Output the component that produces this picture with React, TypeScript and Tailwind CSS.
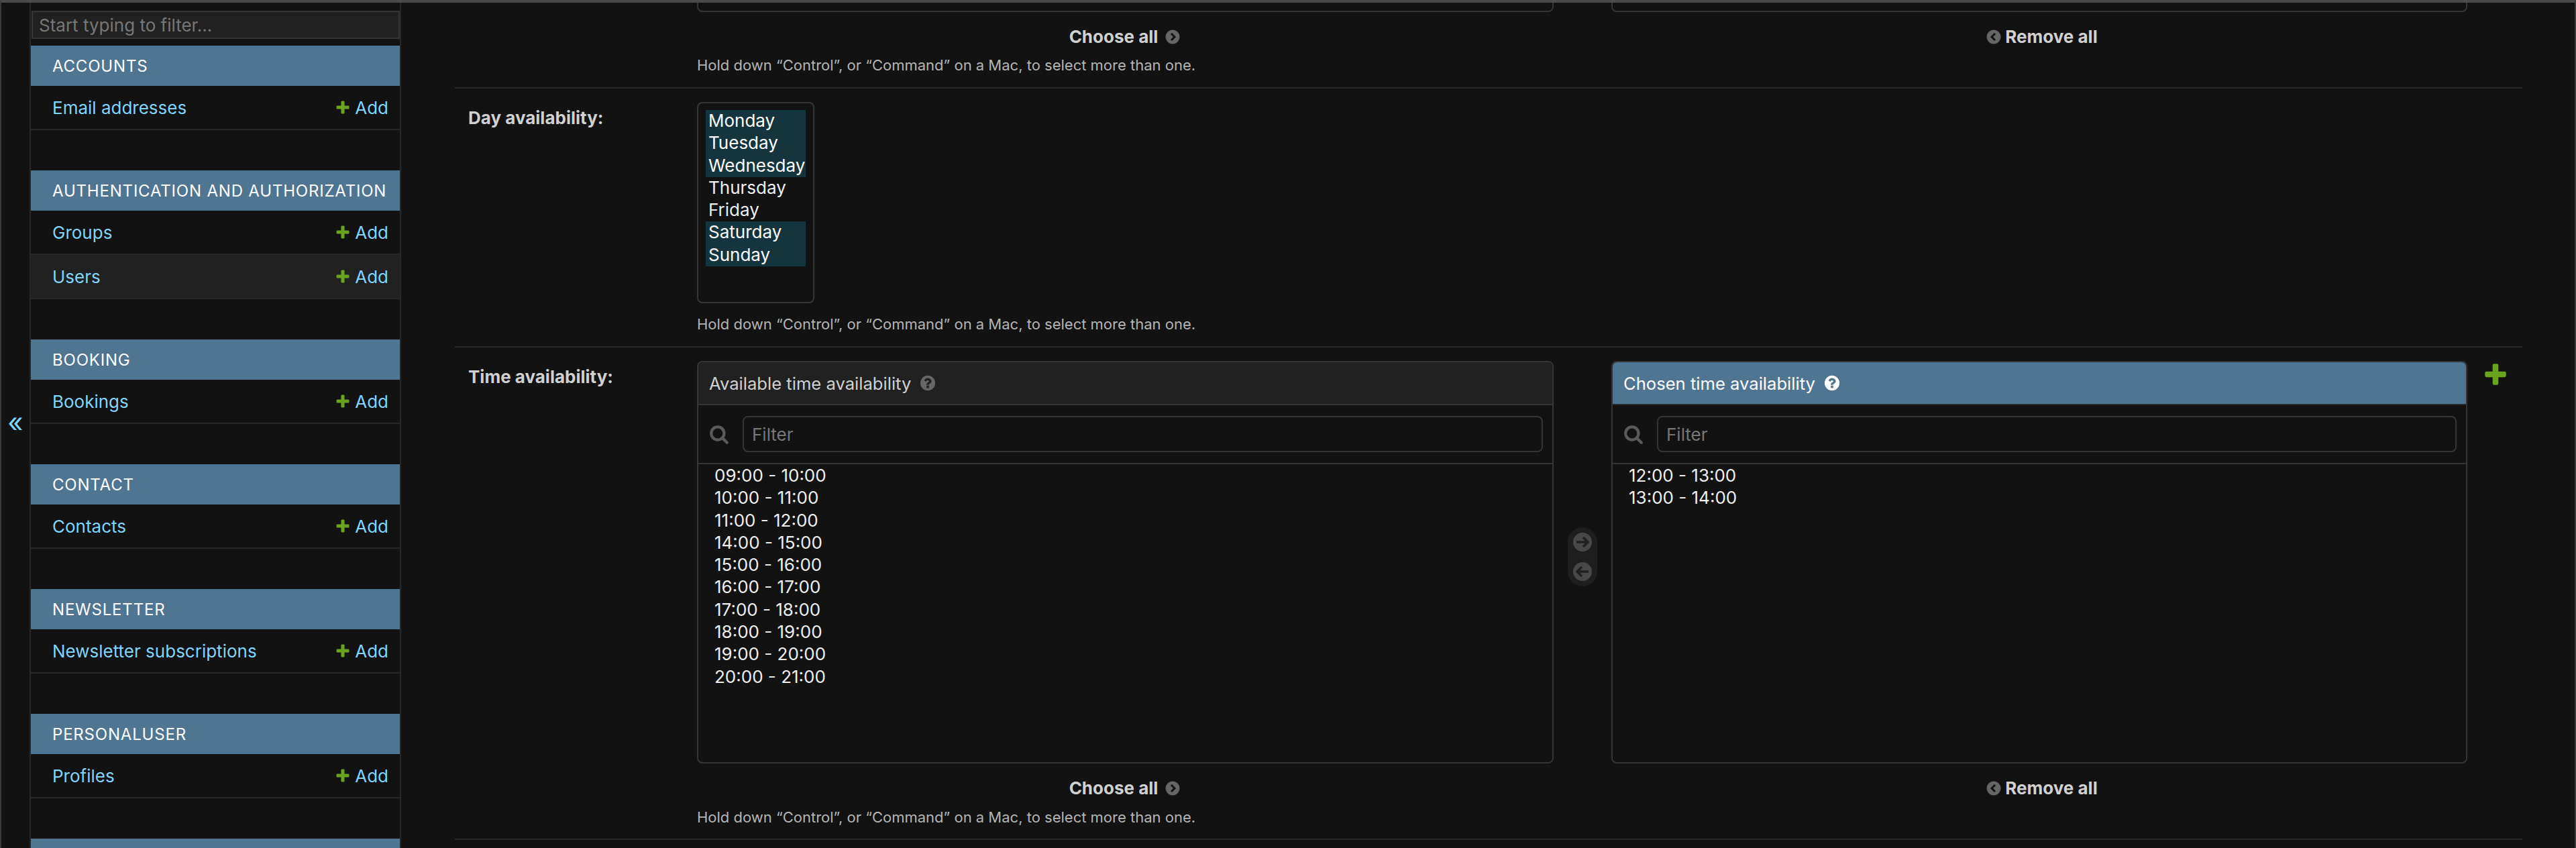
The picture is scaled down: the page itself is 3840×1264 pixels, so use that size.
import React from 'react';

const fontClass = "font-['Inter','Liberation_Sans',sans-serif]";

const sections = [
  { title: 'ACCOUNTS', rows: ['Email addresses'] },
  { title: 'AUTHENTICATION AND AUTHORIZATION', rows: ['Groups', 'Users'] },
  { title: 'BOOKING', rows: ['Bookings'] },
  { title: 'CONTACT', rows: ['Contacts'] },
  { title: 'NEWSLETTER', rows: ['Newsletter subscriptions'] },
  { title: 'PERSONALUSER', rows: ['Profiles'] },
];

const days = [
  { name: 'Monday', selected: true },
  { name: 'Tuesday', selected: true },
  { name: 'Wednesday', selected: true },
  { name: 'Thursday', selected: false },
  { name: 'Friday', selected: false },
  { name: 'Saturday', selected: true },
  { name: 'Sunday', selected: true },
];

const availableTimes = [
  '09:00 - 10:00',
  '10:00 - 11:00',
  '11:00 - 12:00',
  '14:00 - 15:00',
  '15:00 - 16:00',
  '16:00 - 17:00',
  '17:00 - 18:00',
  '18:00 - 19:00',
  '19:00 - 20:00',
  '20:00 - 21:00',
];

const chosenTimes = ['12:00 - 13:00', '13:00 - 14:00'];

const PlusIcon = ({ className }: { className: string }) => (
  <svg viewBox="0 0 1792 1792" className={className}>
    <path
      fill="#6aa41e"
      d="M1600 796v192q0 40-28 68t-68 28h-416v416q0 40-28 68t-68 28h-192q-40 0-68-28t-28-68v-416h-416q-40 0-68-28t-28-68v-192q0-40 28-68t68-28h416v-416q0-40 28-68t68-28h192q40 0 68 28t28 68v416h416q40 0 68 28t28 68z"
    />
  </svg>
);

const HelpIcon = ({ color }: { color: string }) => (
  <svg viewBox="0 0 1792 1792" className="w-[26px] h-[26px] shrink-0">
    <path
      fill={color}
      d="M1024 1376v-192q0-14-9-23t-23-9h-192q-14 0-23 9t-9 23v192q0 14 9 23t23 9h192q14 0 23-9t9-23zm256-672q0-88-55.5-163t-138.5-116-170-41q-243 0-371 213-15 24 8 42l132 100q7 6 19 6 16 0 25-12 53-68 86-92 34-24 86-24 48 0 85.5 26t37.5 59q0 38-20 61t-68 45q-63 28-115.5 86.5t-52.5 125.5v36q0 14 9 23t23 9h192q14 0 23-9t9-23q0-19 21.5-49.5t54.5-49.5q32-18 49-28.5t46-35 44.5-48 28-60.5 12.5-81zm384 192q0 209-103 385.5t-279.5 279.5-385.5 103-385.5-103-279.5-279.5-103-385.5 103-385.5 279.5-279.5 385.5-103 385.5 103 279.5 279.5 103 385.5z"
    />
  </svg>
);

const SearchIcon = () => (
  <svg viewBox="0 0 1792 1792" className="w-[30px] h-[30px] shrink-0">
    <path
      fill="#5a5a5a"
      d="M1216 832q0-185-131.5-316.5t-316.5-131.5-316.5 131.5-131.5 316.5 131.5 316.5 316.5 131.5 316.5-131.5 131.5-316.5zm512 832q0 52-38 90t-90 38q-54 0-90-38l-343-342q-179 124-399 124-143 0-273.5-55.5t-225-150-150-225-55.5-273.5 55.5-273.5 150-225 225-150 273.5-55.5 273.5 55.5 225 150 150 225 55.5 273.5q0 220-124 399l343 343q37 37 37 90z"
    />
  </svg>
);

const ChevronCircle = ({ dir }: { dir: 'left' | 'right' }) => (
  <svg viewBox="0 0 22 22" className="w-[22px] h-[22px] shrink-0">
    <circle cx="11" cy="11" r="10.5" fill="#666666" />
    <polyline
      points={dir === 'right' ? '9,6 14,11 9,16' : '13,6 8,11 13,16'}
      fill="none"
      stroke="#121212"
      strokeWidth="3"
    />
  </svg>
);

const ArrowCircle = ({ dir }: { dir: 'left' | 'right' }) => (
  <svg viewBox="0 0 28 28" className="w-[28px] h-[28px]">
    <circle cx="14" cy="14" r="14" fill="#484848" />
    <path
      d={dir === 'right' ? 'M5 14h16M15 7l7 7-7 7' : 'M23 14H7M13 7l-7 7 7 7'}
      fill="none"
      stroke="#1f1f1f"
      strokeWidth="3.5"
    />
  </svg>
);

const HelpText = ({ className }: { className: string }) => (
  <p className={`text-[22px] leading-[28px] text-[#b4b4b4] ${className}`}>
    Hold down “Control”, or “Command” on a Mac, to select more than one.
  </p>
);

const ChooseRow = () => (
  <>
    <div className="flex items-center justify-center gap-[11px] pr-[2px] text-[26px] leading-[30px] font-bold text-[#d0d0d0]">
      Choose all <ChevronCircle dir="right" />
    </div>
    <div />
    <div className="flex items-center justify-center gap-[6px] pl-[8px] text-[26px] leading-[30px] font-bold text-[#d0d0d0]">
      <ChevronCircle dir="left" /> Remove all
    </div>
  </>
);

const SelectorBox = ({ title, chosen, items }: { title: string; chosen: boolean; items: string[] }) => (
  <div className="h-[600px] flex flex-col border-2 border-[#353535] rounded-[8px] overflow-hidden">
    <div
      className={`h-[64px] shrink-0 flex items-center gap-[12px] px-[16px] border-b-2 text-[25.6px] ${
        chosen ? 'bg-[#4e7592] text-white border-[#2a2a2a]' : 'bg-[#212121] text-[#d0d0d0] border-[#353535]'
      }`}
    >
      <span className="mt-[2px]">{title}</span>
      <HelpIcon color={chosen ? '#ffffff' : '#666666'} />
    </div>
    <div className="h-[88px] shrink-0 flex items-center gap-[20px] pl-[16px] pr-[14px] border-b-2 border-[#353535]">
      <SearchIcon />
      <input
        placeholder="Filter"
        className="flex-1 h-[54px] px-[12px] text-[26px] bg-transparent border-2 border-[#353535] rounded-[8px] placeholder:text-[#777777] outline-none"
      />
    </div>
    <ul className="pl-[24px] text-[26px] leading-[33.3px] text-[#eeeeee]">
      {items.map(item => (
        <li key={item}>{item}</li>
      ))}
    </ul>
  </div>
);

export default function App() {
  return (
    <div className={`${fontClass} w-full h-[1264px] overflow-hidden flex bg-[#121212] border-t-4 border-t-[#4a4a4a] border-x-2 border-x-[#3a3a3a]`}>
      <div className="w-[44px] shrink-0 flex items-center justify-center border-r-2 border-[#272727]">
        <span className="text-[40px] leading-none text-[#81d4fa] -mt-[8px]">«</span>
      </div>

      <aside className="w-[552px] shrink-0 border-r-2 border-[#272727]">
        <input
          placeholder="Start typing to filter..."
          className="block w-[549px] h-[42px] mt-[12px] mb-[10px] pl-[9px] pr-[10px] ml-px text-[26px] bg-[#212121] border-2 border-[#353535] text-[#eeeeee] placeholder:text-[#777777] outline-none"
        />
        {sections.map(section => (
          <div key={section.title} className="mb-[60px]">
            <div className="h-[60px] flex items-center pl-[32px] pt-[1px] text-[24px] tracking-[0.8px] text-white bg-[#4e7592] whitespace-nowrap">
              {section.title}
            </div>
            {section.rows.map(row => (
              <div
                key={row}
                className={`h-[66px] flex items-center justify-between pl-[32px] pr-[17px] border-b-2 border-[#272727] text-[26px] text-[#81d4fa] ${
                  row === 'Users' ? 'bg-[#212121]' : ''
                }`}
              >
                <span>{row}</span>
                <span className="flex items-center gap-[6px]">
                  <PlusIcon className="w-[24px] h-[24px]" />
                  Add
                </span>
              </div>
            ))}
          </div>
        ))}
        <div className="h-[60px] bg-[#4e7592]" />
      </aside>

      <main className="flex-1 min-w-0 pl-[80px] pr-[78px] overflow-hidden">
        <div className="h-[128px] pl-[361px] border-b-2 border-[#272727]">
          <div className="grid grid-cols-[1277px_86px_1276px] h-[14px]">
            <div className="border-2 border-t-0 border-[#353535] rounded-b-[8px]" />
            <div />
            <div className="border-2 border-t-0 border-[#353535] rounded-b-[8px]" />
          </div>
          <div className="grid grid-cols-[1277px_86px_1276px] mt-[22px]">
            <ChooseRow />
          </div>
          <HelpText className="mt-[13px]" />
        </div>

        <div className="h-[386px] flex border-b-2 border-[#272727]">
          <label className="w-[361px] shrink-0 pl-[20px] pt-[28px] text-[26px] leading-[32px] font-bold text-[#d0d0d0]">
            Day availability:
          </label>
          <div className="pt-[20px]">
            <div className="w-[175px] h-[300px] border-2 border-[#353535] rounded-[8px] px-[11px] pt-[10px]">
              {days.map(day => (
                <div
                  key={day.name}
                  className={`h-[33.3px] leading-[32px] pl-[4px] text-[26px] whitespace-nowrap ${
                    day.selected ? 'bg-[#14353d] text-white' : 'text-[#eeeeee]'
                  }`}
                >
                  {day.name}
                </div>
              ))}
            </div>
            <HelpText className="mt-[17px]" />
          </div>
        </div>

        <div className="h-[734px] flex border-b-2 border-[#272727]">
          <label className="w-[361px] shrink-0 pl-[20px] pt-[28px] text-[26px] leading-[32px] font-bold text-[#d0d0d0]">
            Time availability:
          </label>
          <div className="pt-[20px]">
            <div className="flex items-start">
              <div className="grid grid-cols-[1277px_86px_1276px]">
                <SelectorBox title="Available time availability" chosen={false} items={availableTimes} />
                <div className="flex justify-center pt-[248px]">
                  <div className="w-[44px] h-[88px] rounded-[22px] bg-[#1e1e1e] flex flex-col items-center justify-center gap-[16px]">
                    <ArrowCircle dir="right" />
                    <ArrowCircle dir="left" />
                  </div>
                </div>
                <SelectorBox title="Chosen time availability" chosen items={chosenTimes} />
                <div className="col-span-3 grid grid-cols-[1277px_86px_1276px] mt-[22px]">
                  <ChooseRow />
                </div>
              </div>
              <PlusIcon className="w-[40px] h-[40px] ml-[22px] mt-[0px]" />
            </div>
            <HelpText className="mt-[14px]" />
          </div>
        </div>
      </main>
    </div>
  );
}
